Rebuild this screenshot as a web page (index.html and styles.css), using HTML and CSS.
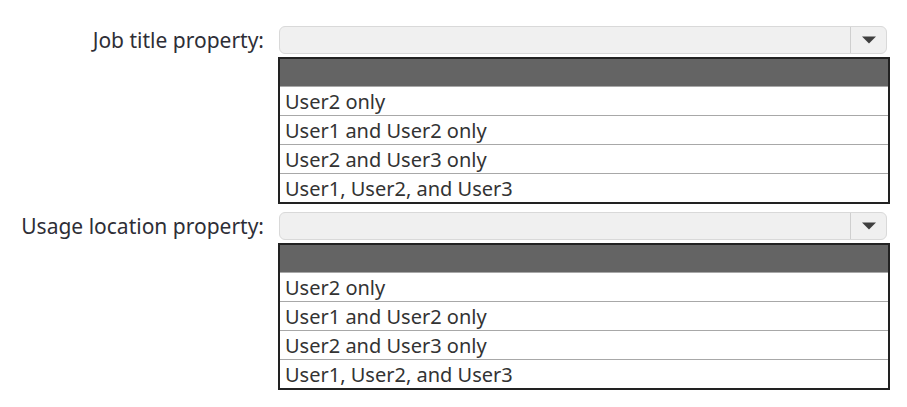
FILE: index.html
```html
<html>
    <head>
        <link rel="stylesheet" href="styles.css">
    </head>
    <body>
        <div class="form">
            <div class="field">
                <label class="field-label">Job title property:</label>
                <div class="select">
                    <span class="select-value"></span>
                    <span class="select-arrow"><svg width="16" height="8" viewBox="0 0 16 8"><path d="M1 0.5 L15 0.5 L8 7.5 Z" fill="#3f3f3f"/></svg></span>
                </div>
            </div>
            <div class="field">
                <span></span>
                <ul class="options">
                    <li class="options-head"></li>
                    <li>User2 only</li>
                    <li>User1 and User2 only</li>
                    <li>User2 and User3 only</li>
                    <li>User1, User2, and User3</li>
                </ul>
            </div>
            <div class="field">
                <label class="field-label">Usage location property:</label>
                <div class="select">
                    <span class="select-value"></span>
                    <span class="select-arrow"><svg width="16" height="8" viewBox="0 0 16 8"><path d="M1 0.5 L15 0.5 L8 7.5 Z" fill="#3f3f3f"/></svg></span>
                </div>
            </div>
            <div class="field">
                <span></span>
                <ul class="options">
                    <li class="options-head"></li>
                    <li>User2 only</li>
                    <li>User1 and User2 only</li>
                    <li>User2 and User3 only</li>
                    <li>User1, User2, and User3</li>
                </ul>
            </div>
        </div>
    </body>
</html>
```
FILE: styles.css
```css
body {
    margin: 0;
    background: #fff;
    font-family: "Noto Sans", "Open Sans", sans-serif;
    color: #2e2e36;
}

.form {
    padding-top: 26px;
    display: grid;
    grid-template-columns: 279px 611px;
    row-gap: 3px;
}

.field {
    display: contents;
}

.field-label {
    align-self: center;
    text-align: right;
    padding-right: 15px;
    font-size: 21px;
    line-height: 28px;
    white-space: nowrap;
}

.select {
    display: flex;
    height: 28px;
    width: 608px;
    box-sizing: border-box;
    background-color: #f0f0f0;
    border: 1px solid #d9d9d9;
    border-radius: 6px;
}

.select-value {
    flex: 1;
}

.select-arrow {
    width: 35px;
    border-left: 1px solid #cfcfcf;
    display: flex;
    align-items: center;
    justify-content: center;
}

.options {
    list-style: none;
    margin: 0 0 5px -1px;
    padding: 0;
    border: 2px solid #222;
    font-size: 20px;
    color: #333;
}

.options li {
    height: 28px;
    line-height: 29px;
    padding-left: 5px;
    border-top: 1px solid #a8a8a8;
    white-space: nowrap;
}

.options li.options-head {
    height: 27px;
    border-top: none;
    background-color: #646464;
}
```
